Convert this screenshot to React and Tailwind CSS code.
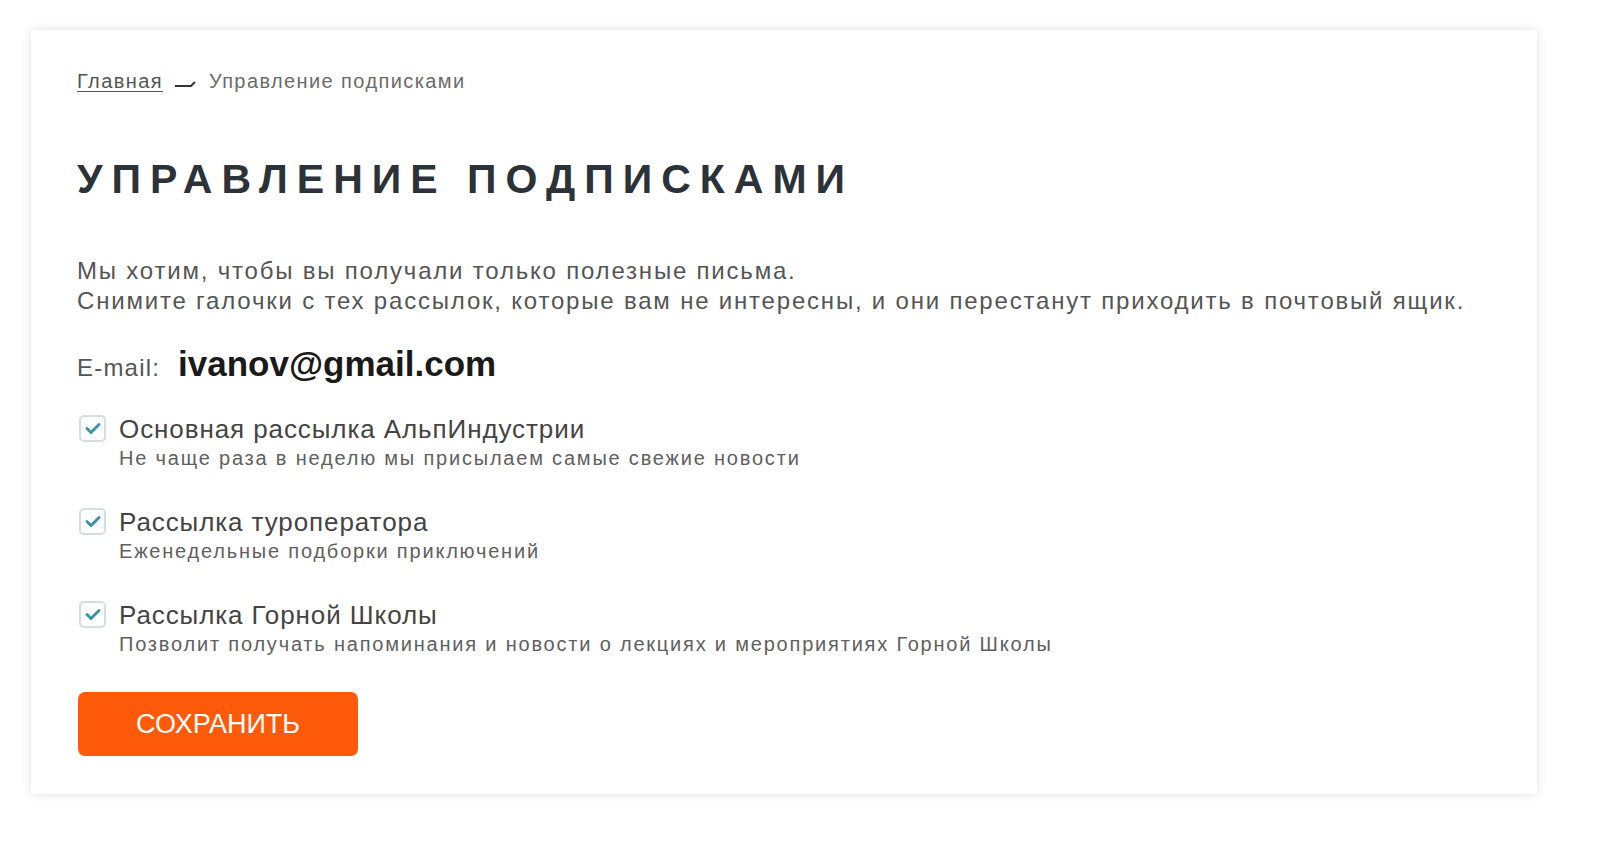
import React, { useState } from 'react';

const lists = [
  { title: 'Основная рассылка АльпИндустрии', note: 'Не чаще раза в неделю мы присылаем самые свежие новости' },
  { title: 'Рассылка туроператора', note: 'Еженедельные подборки приключений' },
  { title: 'Рассылка Горной Школы', note: 'Позволит получать напоминания и новости о лекциях и мероприятиях Горной Школы' },
];

const Check = ({ on, onClick }) => (
  <button
    type="button"
    onClick={onClick}
    className="ml-[2px] mt-[1px] flex h-[27px] w-[27px] shrink-0 items-center justify-center rounded-[5px] border-2 border-[#d3dde3] bg-white"
  >
    {on && (
      <svg width="16" height="13" viewBox="0 0 16 13">
        <path d="M2 6.5l4 4L14 2.5" fill="none" stroke="#3f93a8" strokeWidth="3" strokeLinecap="round" strokeLinejoin="round" />
      </svg>
    )}
  </button>
);

export default function App() {
  const [checked, setChecked] = useState([true, true, true]);

  return (
    <div className="min-h-[841px] bg-white pt-[30px] pl-[31px] pr-[63px]" style={{ fontFamily: '"Liberation Sans", Arial, sans-serif' }}>
      <div className="h-[764px] bg-white pl-[46px] pt-[36px] shadow-[0_0_10px_rgba(0,0,0,0.12)]">
        <div className="flex h-[30px] items-center text-[20px] tracking-[0.07em] text-[#6b6b6b]">
          <a href="#" className="underline decoration-1 underline-offset-[3px] text-[#555]">Главная</a>
          <svg width="26" height="10" viewBox="0 0 26 10" className="mx-[10px] mt-[6px]">
            <path d="M2 7h16l4-4" fill="none" stroke="#333" strokeWidth="2" />
          </svg>
          <span>Управление подписками</span>
        </div>

        <h1 className="mt-[63px] text-[41px] font-bold leading-none tracking-[0.22em] text-[#2b3238]">
          УПРАВЛЕНИЕ ПОДПИСКАМИ
        </h1>

        <p className="mt-[56px] text-[24px] leading-[30px] tracking-[0.075em] text-[#555]">
          Мы хотим, чтобы вы получали только полезные письма.
          <br />
          Снимите галочки с тех рассылок, которые вам не интересны, и они перестанут приходить в почтовый ящик.
        </p>

        <div className="mt-[28px] flex items-baseline gap-[18px] leading-[40px]">
          <span className="text-[24px] tracking-[0.05em] text-[#555]">E-mail:</span>
          <span className="text-[35px] font-bold text-[#1a1a1a]">ivanov@gmail.com</span>
        </div>

        <div className="mt-[26px] flex flex-col gap-[35px]">
          {lists.map((l, i) => (
            <div key={l.title} className="flex gap-[13px]">
              <Check on={checked[i]} onClick={() => setChecked(checked.map((c, j) => (j === i ? !c : c)))} />
              <div>
                <div className="text-[26px] leading-[30px] tracking-[0.035em] text-[#444]">{l.title}</div>
                <div className="text-[20px] leading-[28px] tracking-[0.09em] text-[#606060]">{l.note}</div>
              </div>
            </div>
          ))}
        </div>

        <button type="button" className="ml-[1px] mt-[34px] h-[64px] w-[280px] rounded-[7px] bg-[#ff5a0a] text-[27px] text-white">
          СОХРАНИТЬ
        </button>
      </div>
    </div>
  );
}
